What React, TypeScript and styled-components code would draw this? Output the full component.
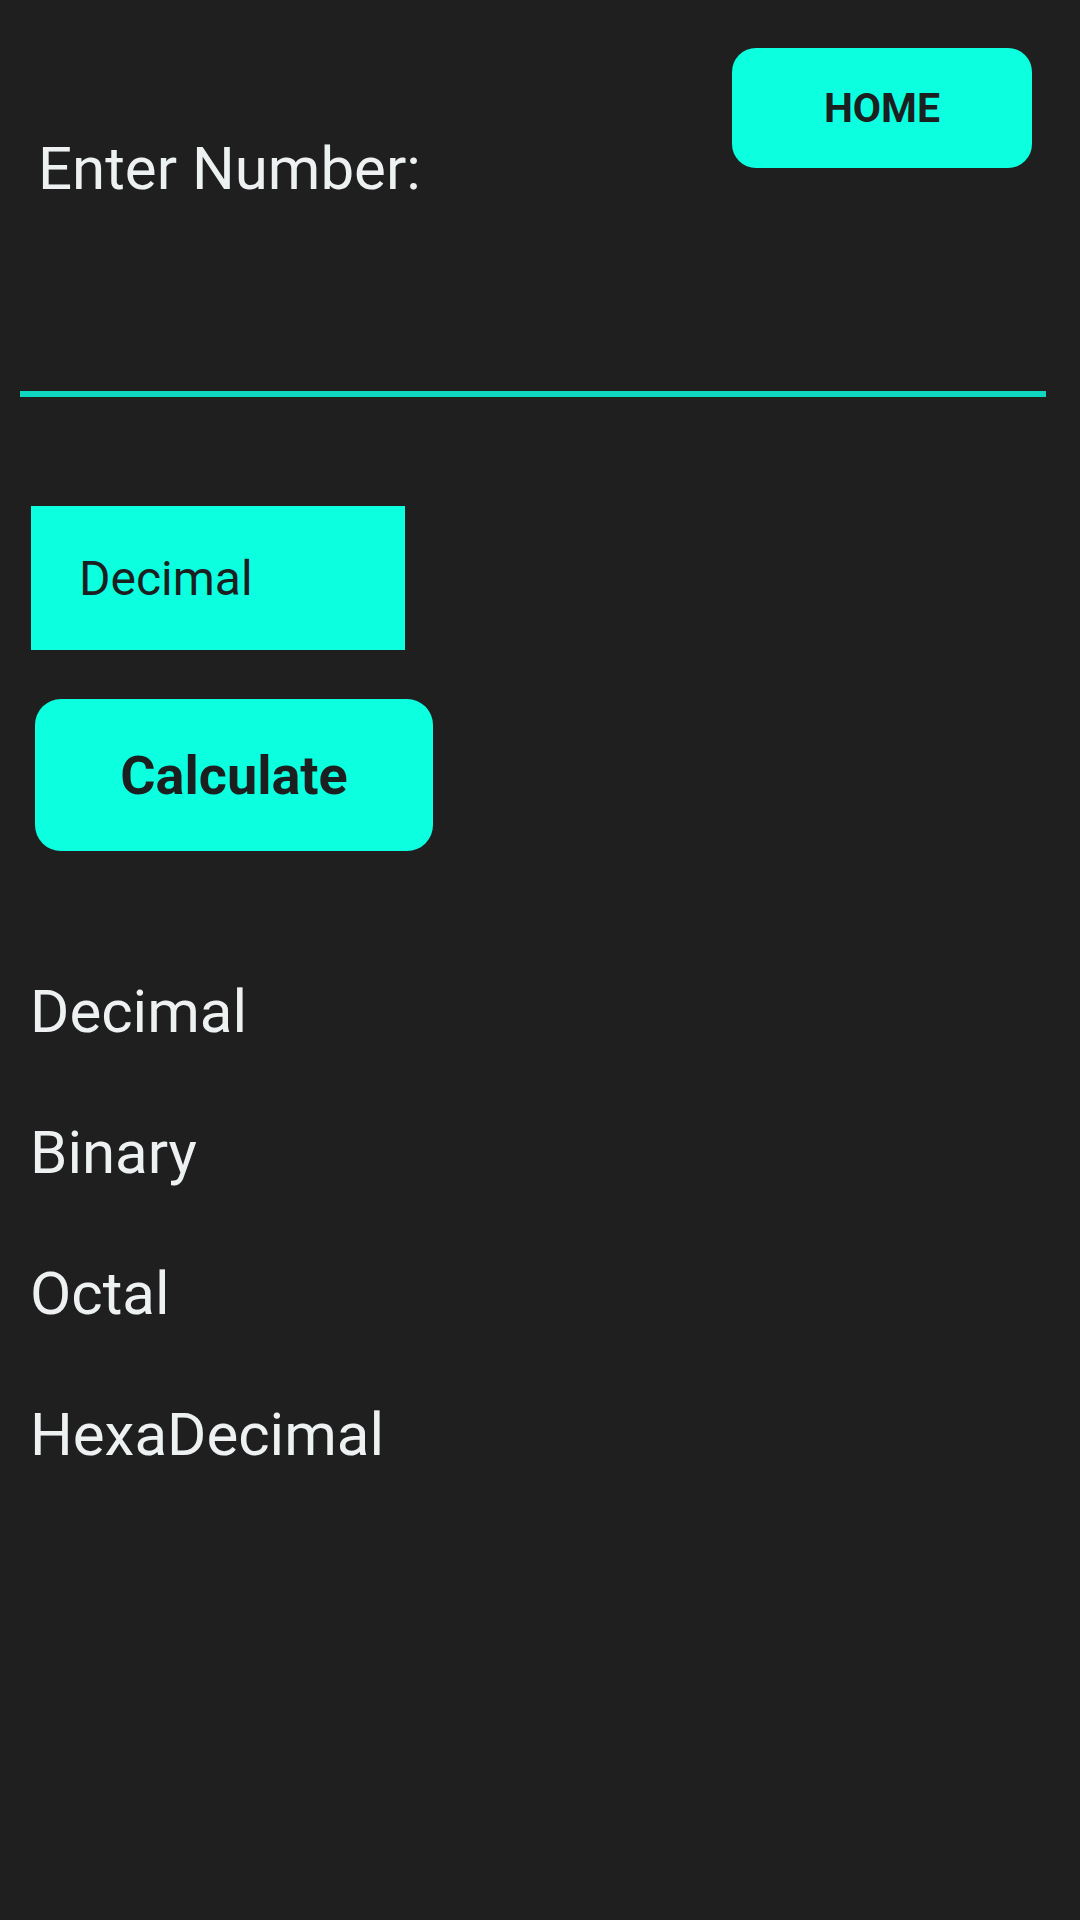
import styled, { createGlobalStyle } from "styled-components";

const ACCENT = "#0cffdf";
const BG = "#1f1f1f";

const GlobalStyle = createGlobalStyle`
  html, body {
    margin: 0;
    padding: 0;
    background: ${BG};
  }
  body {
    font-family: Roboto, "Noto Sans", sans-serif;
  }
`;

const Screen = styled.div`
  width: 1080px;
  height: 1920px;
  background: ${BG};
  display: flex;
  flex-direction: column;
  overflow: hidden;
`;

const Header = styled.div`
  display: flex;
  justify-content: space-between;
  align-items: flex-start;
  padding: 48px 48px 0 38px;
`;

const Label = styled.span`
  margin-top: 91px;
  font-size: 60px;
  line-height: 60px;
  color: #eef1f2;
`;

const PillButton = styled.button<{ $size: number; $weight: number }>`
  border: none;
  background: ${ACCENT};
  color: #1c1f1f;
  font-family: Roboto, sans-serif;
  font-size: ${(p) => p.$size}px;
  font-weight: ${(p) => p.$weight};
  border-radius: 24px;
  display: flex;
  align-items: center;
  justify-content: center;
  padding: 0;
`;

const HomeButton = styled(PillButton)`
  width: 300px;
  height: 120px;
`;

const InputLine = styled.div`
  margin: 192px 34px 0 20px;
  height: 6px;
  background: #0fd6c0;
`;

const Spinner = styled.div`
  margin: 109px 0 0 31px;
  width: 374px;
  height: 144px;
  background: ${ACCENT};
  display: flex;
  align-items: center;
  padding-left: 48px;
  box-sizing: border-box;
  font-size: 48px;
  color: #1c1f1f;
`;

const CalcButton = styled(PillButton)`
  margin: 49px 0 0 35px;
  width: 398px;
  height: 152px;
  border-radius: 26px;
`;

const Results = styled.div`
  display: flex;
  flex-direction: column;
  gap: 81px;
  margin: 131px 0 0 30px;
`;

const ResultLine = styled.div`
  font-size: 60px;
  line-height: 60px;
  color: #eef1f2;
`;

export default function App() {
  const results = ["Decimal", "Binary", "Octal", "HexaDecimal"];
  return (
    <Screen>
      <GlobalStyle />
      <Header>
        <Label>Enter Number:</Label>
        <HomeButton $size={41} $weight={700}>
          HOME
        </HomeButton>
      </Header>
      <InputLine />
      <Spinner>Decimal</Spinner>
      <CalcButton $size={54} $weight={700}>
        Calculate
      </CalcButton>
      <Results>
        {results.map((r) => (
          <ResultLine key={r}>{r}</ResultLine>
        ))}
      </Results>
    </Screen>
  );
}
